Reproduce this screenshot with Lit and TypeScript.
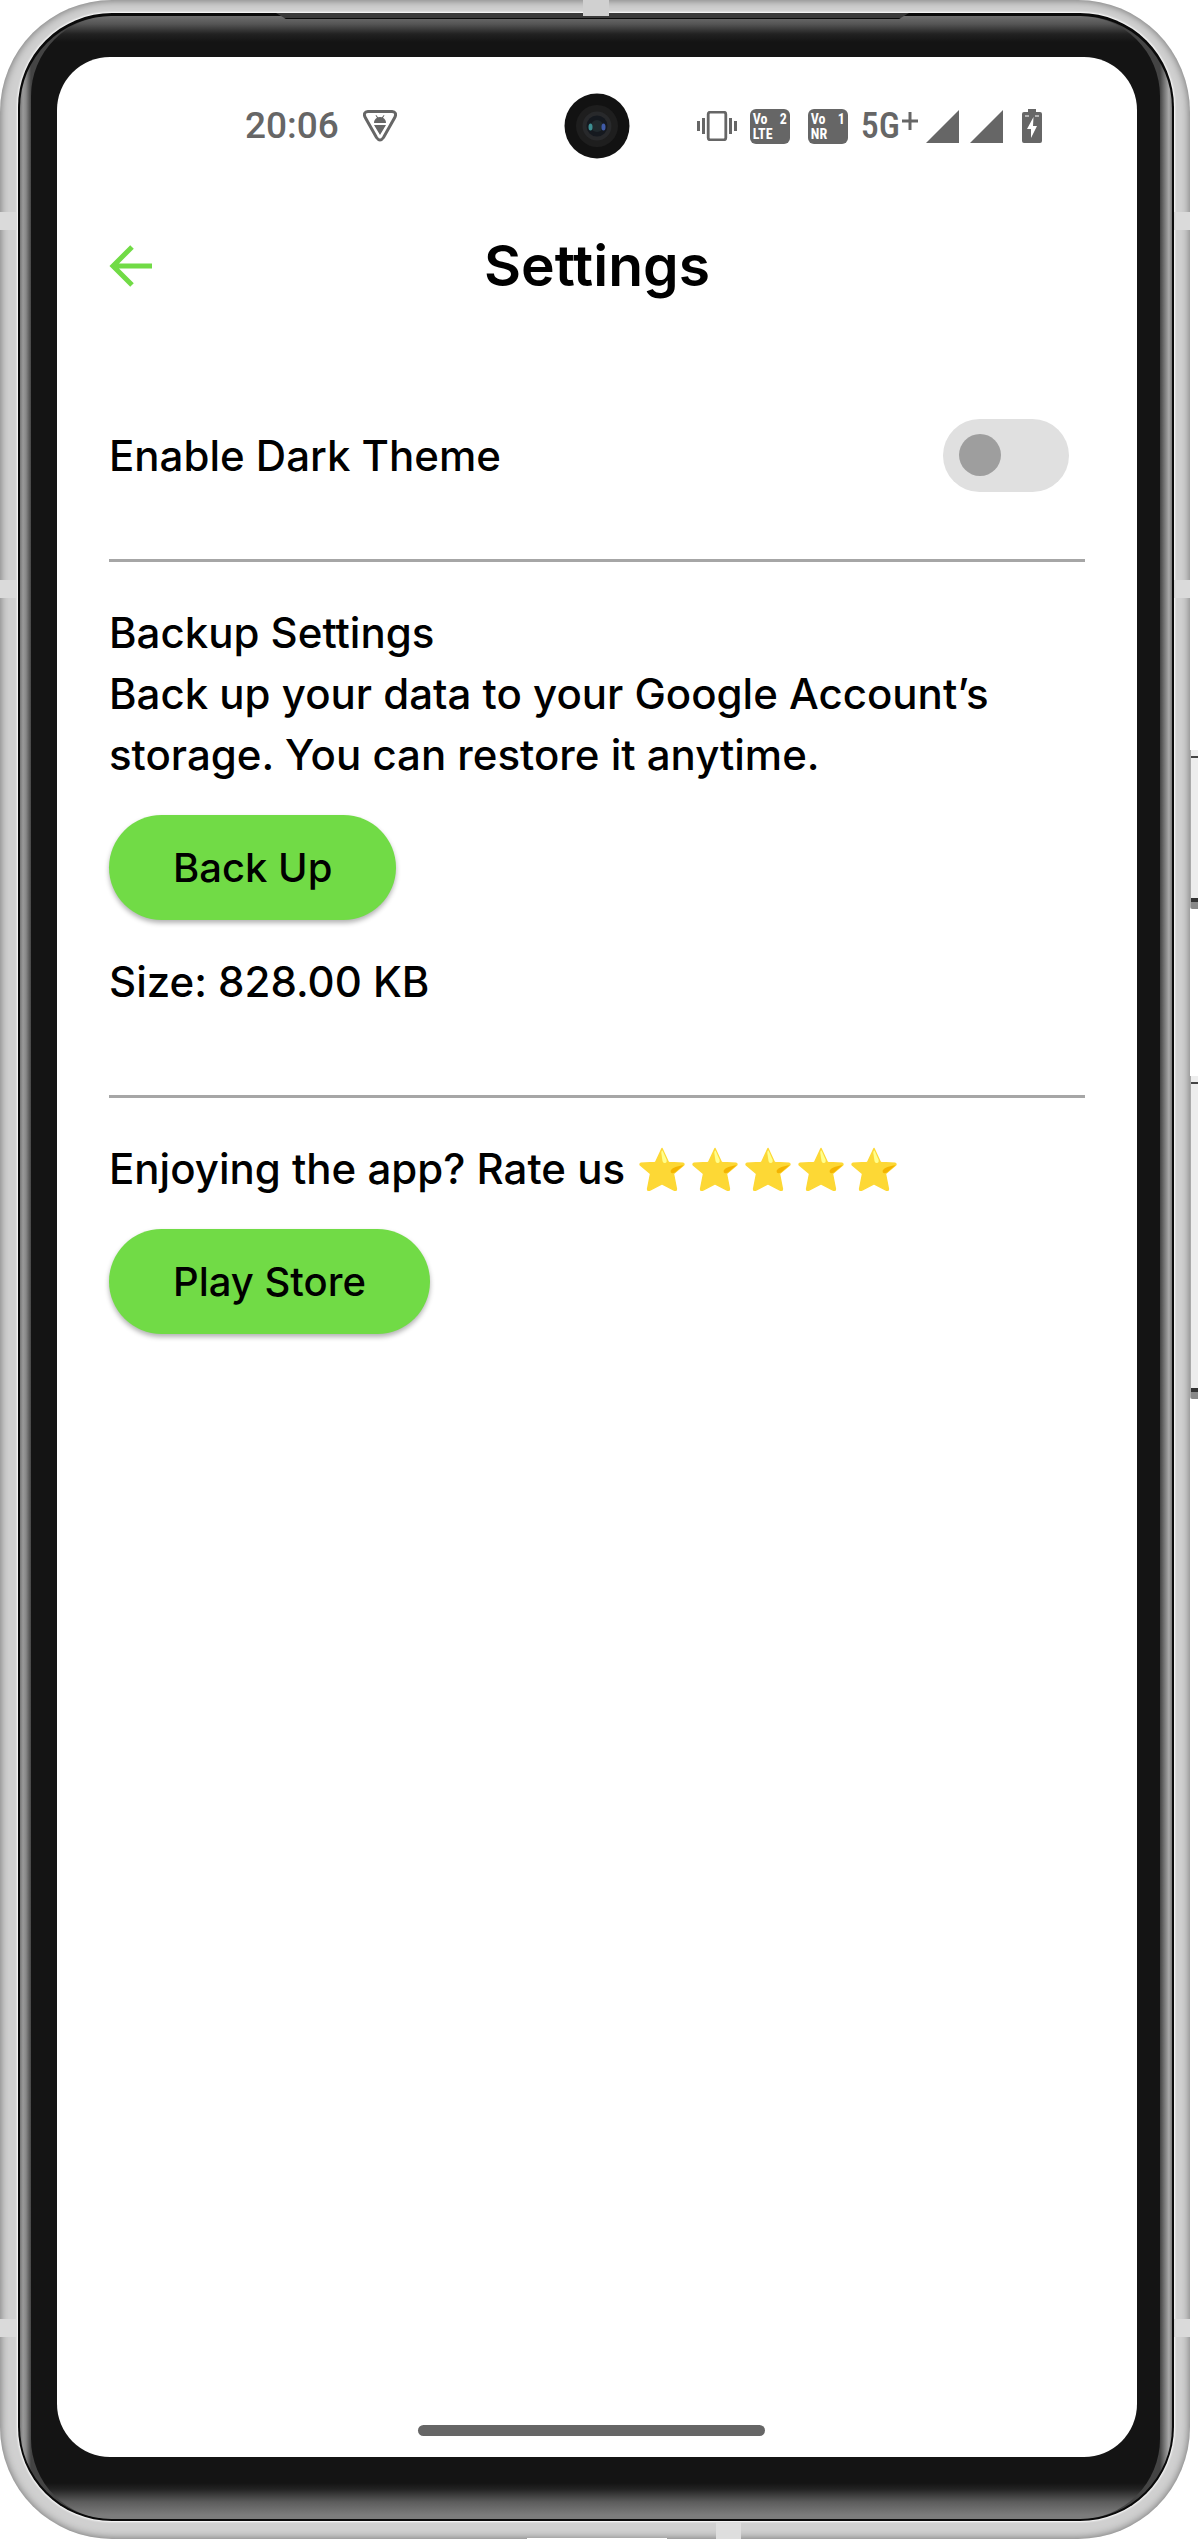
import { LitElement, html, css, svg } from "lit";
import { customElement, state } from "lit/decorators.js";

@customElement("rating-stars")
class RatingStars extends LitElement {
  static styles = css`
    :host {
      display: inline-flex;
      gap: 7px;
    }
    .star {
      display: block;
      width: 46px;
      height: 44px;
    }
  `;
  render() {
    return [1, 2, 3, 4, 5].map(
      () => html`<svg class="star" viewBox="0 0 46 44" aria-hidden="true">
        <path
          d="M23 1.5 29 14.5 Q29.4 15.4 30.400 15.500L44.200 16.300 Q45.500 17 44.500 18.200L34.400 26.600 37.400 42 Q37.300 44 35.500 43.300L23 36.800 10.500 43.300 Q8.700 44 8.600 42L11.600 26.600 1.500 18.200 Q.5 17 1.800 16.300L15.600 15.500 Q16.600 15.400 17 14.500Z"
          fill="#fdd835"
          stroke="#fdd835"
          stroke-width="1.500"
          stroke-linejoin="round"
        />
        <path d="M23.500 3.500Q22.200 3 22.300 6L23.500 14Q24 16.500 26.200 16Q28.300 15.500 27.500 12.500Z" fill="#ffff8d" />
        <path d="M44.500 18.300C39 19 33 20.500 31.800 23.500C31 26 33 27 36 25.500Z" fill="#f4b400" />
      </svg>`
    );
  }
}

@customElement("status-bar")
class StatusBar extends LitElement {
  static styles = css`
    :host {
      display: grid;
      grid-template-columns: 1fr 66px 1fr;
      align-items: center;
      height: 138px;
      color: #666;
      font-family: Roboto, sans-serif;
    }
    .left {
      display: flex;
      align-items: center;
      gap: 24px;
      padding-left: 188px;
    }
    .right {
      display: flex;
      align-items: center;
      justify-content: flex-end;
      padding-right: 95px;
    }
    .time {
      font-size: 37px;
      line-height: 44px;
      font-weight: 500;
    }
    svg {
      display: block;
      flex: none;
    }
    .badge {
      display: grid;
      grid-template-columns: 1fr auto;
      box-sizing: border-box;
      width: 40px;
      height: 35px;
      padding: 3px;
      margin-left: 18px;
      border-radius: 6px;
      background: #666;
      color: #fff;
      font-family: "Roboto Condensed", "Liberation Sans Narrow", Roboto, sans-serif;
      font-size: 14px;
      line-height: 15px;
      font-weight: 700;
    }
    .first {
      margin-left: 13px;
    }
    .network {
      display: flex;
      margin-left: 13px;
      margin-right: 8px;
      font-family: "Roboto Condensed", "Liberation Sans Narrow", Roboto, sans-serif;
      font-size: 36px;
      line-height: 44px;
      font-weight: 500;
    }
    .plus {
      margin: 8px 0 0 2px;
    }
    .signal {
      margin-right: 11px;
    }
    .battery {
      margin-left: 8px;
    }
  `;
  render() {
    const signal = svg`<path d="M0 33 33 0V33Z" fill="#666"/>`;
    return html`
      <div class="left">
        <span class="time">20:06</span>
        <svg width="34" height="32" viewBox="0 0 34 32" aria-hidden="true">
          <path
            d="M5 1.500H29Q34 2 32 7L20.500 27.500Q17 32.500 13.500 27.500L2 7Q0 2 5 1.500Z"
            fill="none"
            stroke="#666"
            stroke-width="3"
          />
          <path
            d="M11 13A6 6 0 0 1 14 7.800L12.500 5.500 13.200 5 15 7.300A6 6 0 0 1 19 7.300L20.800 5 21.500 5.500 20 7.800A6 6 0 0 1 23 13ZM11 15H23L17 25Z"
            fill="#666"
          />
        </svg>
      </div>
      <svg width="66" height="66" viewBox="0 0 66 66" aria-hidden="true">
        <circle cx="33" cy="33" r="32.500" fill="#121212" />
        <circle cx="33" cy="33" r="21" fill="#1e1e1e" />
        <circle cx="33" cy="33" r="14.500" fill="#28292b" />
        <circle cx="33" cy="33" r="10.500" fill="#15191f" />
        <circle cx="33" cy="33" r="6" fill="#20292d" />
        <ellipse cx="26.500" cy="34" rx="2" ry="3.500" fill="#3d8f92" />
        <ellipse cx="39.500" cy="34" rx="2" ry="3.500" fill="#405ba8" />
      </svg>
      <div class="right">
        <svg width="40" height="30" viewBox="0 0 40 30" aria-hidden="true">
          <rect x="11.200" y="1.200" width="17.600" height="27.600" rx="2" fill="none" stroke="#666" stroke-width="2.800" />
          <path d="M0 10h3v10H0zM5 7h3v16H5zM32 7h3v16h-3zM37 10h3v10h-3z" fill="#666" />
        </svg>
        <div class="badge first"><span>Vo</span><span>2</span><span>LTE</span></div>
        <div class="badge"><span>Vo</span><span>1</span><span>NR</span></div>
        <div class="network">
          5G<svg class="plus" width="16" height="18" viewBox="0 0 16 18" aria-label="+">
            <path d="M6.500 0h3v7.500H16v3H9.500V18h-3v-7.500H0v-3h6.500z" fill="#666" />
          </svg>
        </div>
        <svg class="signal" width="33" height="33" viewBox="0 0 33 33" aria-hidden="true">${signal}</svg>
        <svg class="signal" width="33" height="33" viewBox="0 0 33 33" aria-hidden="true">${signal}</svg>
        <svg class="battery" width="20" height="34" viewBox="0 0 20 34" aria-hidden="true">
          <path d="M6 0h8v3h4q2 0 2 2v27q0 2-2 2H2q-2 0-2-2V5q0-2 2-2h4z" fill="#666" />
          <path d="M3 6.500h4v1H3zM13 6.500h4v1h-4zM11.500 8 5 20h4v9l6-12h-4z" fill="#fff" />
        </svg>
      </div>
    `;
  }
}

@customElement("settings-screen")
class SettingsScreen extends LitElement {
  @state() private dark = false;

  static styles = css`
    :host {
      display: flex;
      flex-direction: column;
      flex: 1;
      font-family: Inter, "Open Sans", sans-serif;
      font-size: 42px;
      line-height: 61px;
      font-weight: 500;
      color: #000;
    }
    .header {
      display: grid;
      grid-template-columns: 44px 1fr 44px;
      align-items: center;
      height: 142px;
      padding: 0 52px;
    }
    .back {
      padding: 0;
      border: 0;
      background: none;
      cursor: pointer;
    }
    .back svg {
      display: block;
    }
    .title {
      margin: 0;
      text-align: center;
      font-size: 57px;
      line-height: 72px;
      font-weight: 600;
    }
    .content {
      flex: 1;
      padding: 0 52px;
    }
    .section {
      border-bottom: 3px solid #a6a6a6;
    }
    .theme {
      display: flex;
      align-items: center;
      justify-content: space-between;
      height: 225px;
      padding: 14px 16px 0 0;
      box-sizing: border-box;
    }
    .switch {
      appearance: none;
      width: 126px;
      height: 73px;
      margin: 0;
      padding: 0 16px;
      display: flex;
      align-items: center;
      border-radius: 37px;
      background: #e0e0e0;
      cursor: pointer;
    }
    .switch::before {
      content: "";
      width: 42px;
      height: 42px;
      border-radius: 50%;
      background: #9e9e9e;
    }
    .switch:checked {
      justify-content: flex-end;
      background: #71db46;
    }
    .backup {
      padding: 40px 0 83px;
    }
    .rate {
      padding-top: 40px;
    }
    .text {
      margin: 0;
      font-size: 42px;
      line-height: 61px;
      font-weight: 500;
    }
    .stars {
      display: flex;
      align-items: center;
      gap: 14px;
    }
    .action {
      display: block;
      height: 105px;
      margin: 30px 0 31px;
      padding: 0 64px;
      border: 0;
      border-radius: 53px;
      background: #71db46;
      box-shadow: 0 3px 5px rgba(0, 0, 0, 0.3);
      font: inherit;
      font-size: 40px;
      color: #000;
      cursor: pointer;
    }
    .footer {
      display: flex;
      justify-content: center;
      padding: 0 11px 21px 0;
    }
    .home {
      width: 347px;
      height: 11px;
      border-radius: 6px;
      background: #666;
    }
  `;
  render() {
    return html`
      <header class="header">
        <button class="back" aria-label="Back">
          <svg width="44" height="42" viewBox="0 0 44 42" aria-hidden="true">
            <path d="M23 2 4 21 23 40M4 21H43" fill="none" stroke="#71db46" stroke-width="5" />
          </svg>
        </button>
        <h1 class="title">Settings</h1>
      </header>
      <main class="content">
        <section class="section theme">
          <label for="dark">Enable Dark Theme</label>
          <input
            class="switch"
            id="dark"
            type="checkbox"
            role="switch"
            .checked=${this.dark}
            @change=${() => (this.dark = !this.dark)}
          />
        </section>
        <section class="section backup">
          <h2 class="text">Backup Settings</h2>
          <p class="text">Back up your data to your Google Account’s storage. You can restore it anytime.</p>
          <button class="action">Back Up</button>
          <p class="text">Size: 828.00 KB</p>
        </section>
        <section class="rate">
          <div class="stars">
            <p class="text">Enjoying the app? Rate us</p>
            <rating-stars role="img" aria-label="5 stars"></rating-stars>
          </div>
          <button class="action">Play Store</button>
        </section>
      </main>
      <footer class="footer"><div class="home"></div></footer>
    `;
  }
}

@customElement("app-root")
class AppRoot extends LitElement {
  static styles = css`
    :host {
      display: block;
      background: #fff;
    }
    .stage {
      position: relative;
      box-sizing: border-box;
      display: flex;
      min-height: 100vh;
      padding-right: 8px;
    }
    .body {
      position: relative;
      flex: 1;
      display: flex;
      box-sizing: border-box;
      padding: 13px 16px 18px 18px;
      border-radius: 112px;
      background: #d0d0d0;
      box-shadow: inset 0 0 8px rgba(0, 0, 0, 0.5);
    }
    .line {
      flex: 1;
      display: flex;
      padding: 3px 2px 2px;
      border-radius: 94px;
      background: #0a0a0a;
      box-shadow: 0 0 2px 1px #fff;
    }
    .rim {
      flex: 1;
      display: flex;
      padding: 0 12px 0 11px;
      border-radius: 92px;
      background: linear-gradient(
        90deg,
        #777 0,
        #999 3px,
        #888 6px,
        #444 11px,
        #444 calc(100% - 12px),
        #888 calc(100% - 6px),
        #aaa calc(100% - 3px),
        #777 100%
      );
      overflow: hidden;
    }
    .glass {
      flex: 1;
      display: flex;
      padding: 41px 23px 62px 26px;
      border-radius: 80px;
      background: linear-gradient(
        180deg,
        #6e6e6e 0,
        #555 8px,
        #222 18px,
        #141414 26px,
        #141414 calc(100% - 36px),
        #222 calc(100% - 30px),
        #5c5c5c calc(100% - 17px),
        #7c7c7c calc(100% - 4px),
        #7c7c7c 100%
      );
    }
    .screen {
      flex: 1;
      min-width: 0;
      display: flex;
      flex-direction: column;
      border-radius: 53px;
      background: #fff;
    }
    .speaker {
      position: absolute;
      top: 13px;
      left: 276px;
      right: 281px;
      height: 6px;
      background: #3a3a3a;
      border-bottom: 1px solid #0a0a0a;
      box-sizing: border-box;
      clip-path: polygon(0 0, 100% 0, calc(100% - 10px) 100%, 10px 100%);
    }
    .band {
      position: absolute;
      width: 16px;
      height: 18px;
      background: #dadada;
    }
    .lt {
      left: 0;
      top: 212px;
    }
    .lm {
      left: 0;
      top: 580px;
    }
    .lb {
      left: 0;
      bottom: 202px;
    }
    .rt {
      right: 0;
      top: 212px;
    }
    .rm {
      right: 0;
      top: 580px;
    }
    .rb {
      right: 0;
      bottom: 202px;
    }
    .tc {
      top: 0;
      left: 583px;
      width: 26px;
      height: 16px;
      background: #d0d0d0;
    }
    .bc {
      bottom: 0;
      left: 716px;
      width: 25px;
      height: 17px;
      background: #dedede;
    }
    .slot {
      position: absolute;
      bottom: 0;
      left: 527px;
      width: 140px;
      height: 1px;
      background: #fff;
    }
    .key {
      position: absolute;
      right: 0;
      width: 8px;
      box-sizing: border-box;
      background: linear-gradient(
        #eee 0 6px,
        #444 6px 8px,
        #ededed 8px calc(100% - 11px),
        #333 calc(100% - 11px) calc(100% - 7px),
        #888 calc(100% - 7px) 100%
      );
      border-left: 1px solid #aaa;
      border-bottom-left-radius: 2px;
    }
    .power {
      top: 750px;
      height: 159px;
    }
    .volume {
      top: 1076px;
      height: 323px;
    }
  `;
  render() {
    return html`
      <div class="stage">
        <div class="body">
          <div class="line">
            <div class="rim">
              <div class="glass">
                <div class="screen">
                  <status-bar></status-bar>
                  <settings-screen></settings-screen>
                </div>
              </div>
            </div>
          </div>
          <div class="speaker"></div>
          <div class="band lt"></div>
          <div class="band lm"></div>
          <div class="band lb"></div>
          <div class="band rt"></div>
          <div class="band rm"></div>
          <div class="band rb"></div>
          <div class="band tc"></div>
          <div class="band bc"></div>
          <div class="slot"></div>
        </div>
        <div class="key power"></div>
        <div class="key volume"></div>
      </div>
    `;
  }
}
